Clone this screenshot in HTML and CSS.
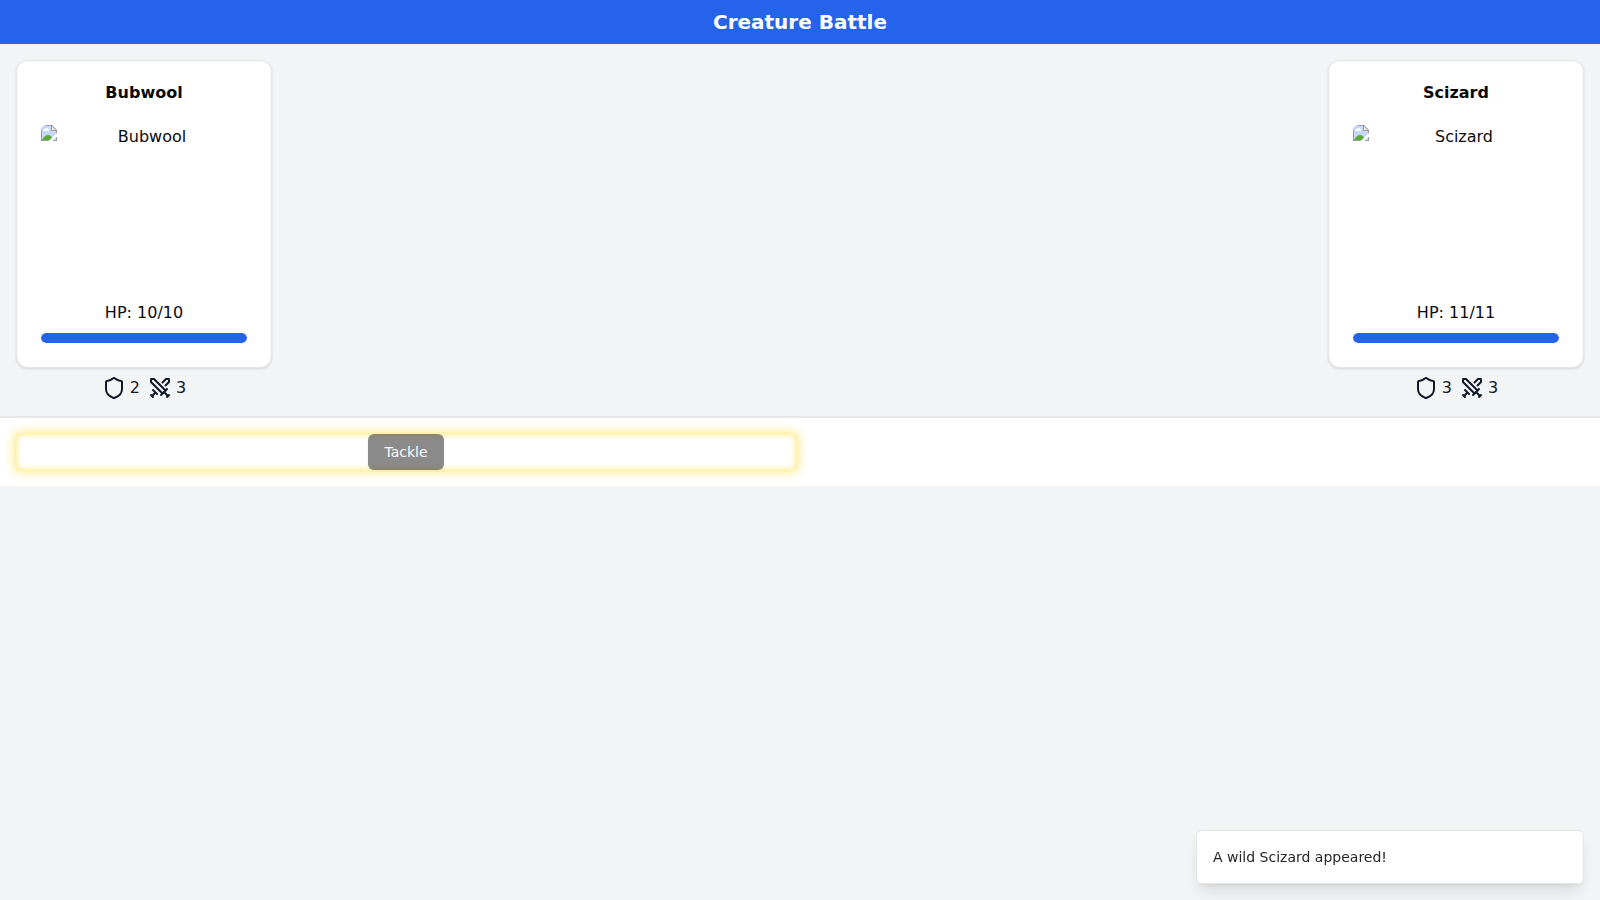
FILE: index.html
```html
<!DOCTYPE html>
<html lang="en">
<head>
<meta charset="utf-8">
<meta name="viewport" content="width=device-width, initial-scale=1">
<title>Creature Battle</title>
<link rel="stylesheet" href="styles.css">
</head>
<body>
<svg width="0" height="0" class="sprite" aria-hidden="true">
  <symbol id="shield" viewBox="0 0 24 24">
    <path d="M20 13c0 5-3.5 7.5-7.66 8.95a1 1 0 0 1-.67-.01C7.5 20.5 4 18 4 13V6a1 1 0 0 1 1-1c2 0 4.500-1.200 6.240-2.720a1.170 1.170 0 0 1 1.520 0C14.510 3.810 17 5 19 5a1 1 0 0 1 1 1z"/>
  </symbol>
  <symbol id="swords" viewBox="0 0 24 24">
    <polyline points="14.5 17.5 3 6 3 3 6 3 17.5 14.5"/>
    <line x1="13" x2="19" y1="19" y2="13"/>
    <line x1="16" x2="20" y1="16" y2="20"/>
    <line x1="19" x2="21" y1="21" y2="19"/>
    <polyline points="14.5 6.5 18 3 21 3 21 6 17.5 9.5"/>
    <line x1="5" x2="9" y1="14" y2="18"/>
    <line x1="7" x2="4" y1="17" y2="20"/>
    <line x1="3" x2="5" y1="19" y2="21"/>
  </symbol>
  <symbol id="missing" viewBox="0 0 16 16">
    <path d="M0 0h11l5 5v11H0z" fill="#9b9b9b"/>
    <path d="M1 1h9v5h5v9H1z" fill="#c5d6f6"/>
    <path d="M11 1.500L14.500 5H11z" fill="#fff"/>
    <path d="M2 6c0-1.500 1-2 2-2 0-1.500 3-1.500 3 0 1 0 1.500 1 1 2z" fill="#fff"/>
    <path d="M1 15c1.500-3 3.500-5 6-5s4 2 6 5z" fill="#5aac35"/>
    <path d="M7.500 16L16 8v3.500L11.500 16z" fill="#fff"/>
  </symbol>
</svg>
<header class="topbar"><h1 class="topbar-title">Creature Battle</h1></header>
<main>
  <section class="arena">
    <article class="creature">
      <div class="card">
        <h2 class="card-title">Bubwool</h2>
        <div class="portrait">
          <svg class="portrait-icon" aria-hidden="true"><use href="#missing"/></svg>
          <span class="portrait-label">Bubwool</span>
        </div>
        <p class="hp">HP: 10/10</p>
        <div class="bar"><div class="bar-fill" style="width:100%"></div></div>
      </div>
      <div class="stats">
        <span class="stat"><svg class="icon" aria-hidden="true"><use href="#shield"/></svg>2</span>
        <span class="stat"><svg class="icon" aria-hidden="true"><use href="#swords"/></svg>3</span>
      </div>
    </article>
    <article class="creature">
      <div class="card">
        <h2 class="card-title">Scizard</h2>
        <div class="portrait">
          <svg class="portrait-icon" aria-hidden="true"><use href="#missing"/></svg>
          <span class="portrait-label">Scizard</span>
        </div>
        <p class="hp">HP: 11/11</p>
        <div class="bar"><div class="bar-fill" style="width:100%"></div></div>
      </div>
      <div class="stats">
        <span class="stat"><svg class="icon" aria-hidden="true"><use href="#shield"/></svg>3</span>
        <span class="stat"><svg class="icon" aria-hidden="true"><use href="#swords"/></svg>3</span>
      </div>
    </article>
  </section>
  <section class="actions">
    <div class="slot slot-active"><button class="skill" type="button" disabled>Tackle</button></div>
    <div class="slot"></div>
  </section>
</main>
<div class="toast" role="status">A wild Scizard appeared!</div>
</body>
</html>
```

FILE: styles.css
```css
* { box-sizing: border-box; }

body {
  margin: 0;
  min-height: 100vh;
  background: #f3f4f6;
  color: #0a0a0a;
  font-family: "DejaVu Sans", sans-serif;
  font-size: 16px;
  line-height: 24px;
}

h1, h2, p { margin: 0; }

.sprite { position: absolute; }

.topbar {
  padding: 8px 16px;
  background: #2563eb;
  color: #fff;
  text-align: center;
}

.topbar-title {
  font-size: 20px;
  line-height: 28px;
  font-weight: 700;
}

.arena {
  display: flex;
  justify-content: space-between;
  padding: 16px;
}

.creature {
  display: flex;
  flex-direction: column;
  gap: 8px;
  width: 256px;
}

.card {
  padding: 24px;
  background: #fff;
  border: 1px solid #e5e5e5;
  border-radius: 12px;
  box-shadow: 0 1px 3px rgba(0, 0, 0, 0.1), 0 1px 2px -1px rgba(0, 0, 0, 0.1);
  text-align: center;
}

.card-title {
  margin-bottom: 24px;
  font-size: 16px;
  line-height: 16px;
  font-weight: 700;
}

.portrait {
  display: flex;
  align-items: flex-start;
  height: 160px;
  margin-bottom: 16px;
  border-radius: 6px;
  overflow: hidden;
}

.portrait-icon {
  width: 16px;
  height: 16px;
}

.portrait-label { flex: 1; }

.hp { margin-bottom: 8px; }

.bar {
  height: 10px;
  background: #e5e7eb;
  border-radius: 5px;
  overflow: hidden;
}

.bar-fill {
  height: 100%;
  background: #2563eb;
  border-radius: 5px;
}

.stats {
  display: flex;
  justify-content: center;
  gap: 8px;
  color: #111827;
}

.stat {
  display: flex;
  align-items: center;
  gap: 4px;
}

.icon {
  width: 24px;
  height: 24px;
  fill: none;
  stroke: currentColor;
  stroke-width: 2;
  stroke-linecap: round;
  stroke-linejoin: round;
}

.actions {
  display: grid;
  grid-template-columns: 1fr 1fr;
  gap: 8px;
  padding: 16px;
  background: #fff;
  border-top: 2px solid #e5e7eb;
}

.slot {
  display: flex;
  justify-content: center;
}

.slot-active {
  box-shadow: 0 0 12px 1px rgba(253, 224, 71, 0.8), inset 0 0 6px rgba(253, 224, 71, 0.8);
}

.skill {
  height: 36px;
  padding: 8px 16px;
  border: 0;
  border-radius: 6px;
  background: #171717;
  color: #fafafa;
  font-family: inherit;
  font-size: 14px;
  line-height: 20px;
  box-shadow: 0 1px 3px rgba(0, 0, 0, 0.1);
  opacity: 0.5;
}

.toast {
  position: fixed;
  right: 16px;
  bottom: 16px;
  width: 388px;
  max-width: calc(100% - 32px);
  padding: 16px;
  background: #fff;
  border: 1px solid #e5e5e5;
  border-radius: 6px;
  box-shadow: 0 10px 15px -3px rgba(0, 0, 0, 0.1), 0 4px 6px -4px rgba(0, 0, 0, 0.1);
  color: #262626;
  font-size: 14px;
  line-height: 20px;
}
```
